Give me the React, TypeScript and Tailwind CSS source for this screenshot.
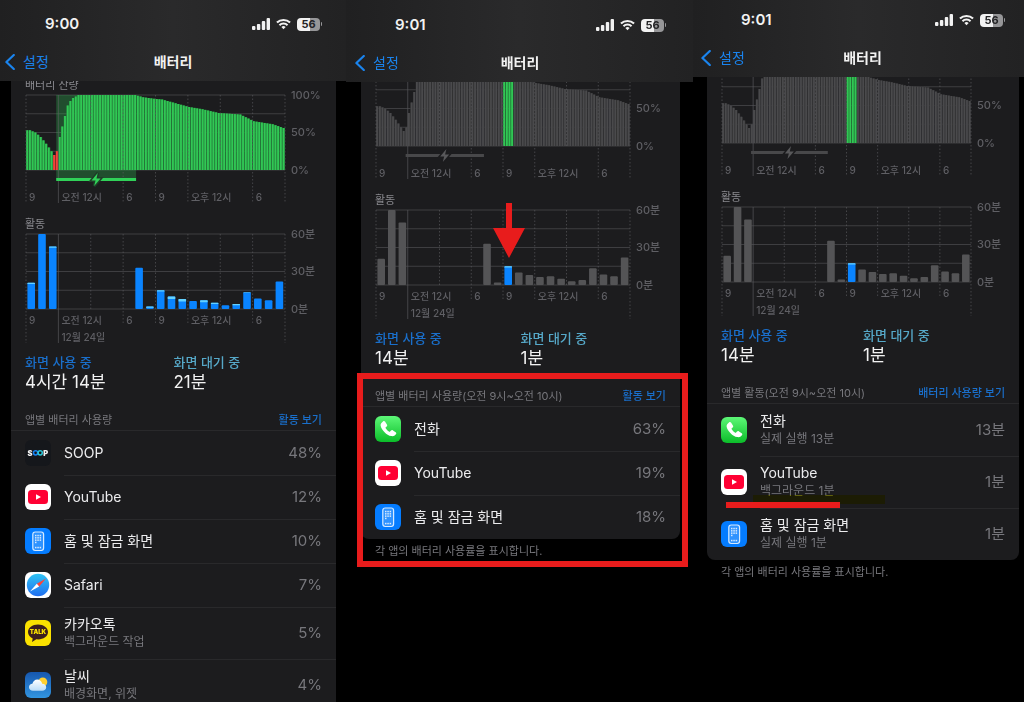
import type { ReactNode } from 'react'
import clsx from 'clsx'

type AppIconName = 'soop' | 'youtube' | 'home' | 'safari' | 'kakao' | 'weather' | 'phone'

interface AppUsage {
  icon: AppIconName
  name: string
  detail?: string
  value: string
  marked?: boolean
}

// battery level per 15 minutes, as [slot, percent] points
const LEVEL_POINTS: [number, number][] = [
  [0, 53], [1, 53], [3, 50], [5, 44], [7, 35], [9, 25], [10, 20], [11, 25], [12, 44], [13, 58],
  [14, 72], [15, 86], [16, 92], [17, 96], [18, 98], [19, 100], [40, 100], [43, 97], [47, 95],
  [50, 94], [54, 90], [57, 87], [60, 84], [65, 81], [71, 76], [79, 74], [84, 65], [91, 61], [95, 56],
]

const LEVELS = Array.from({ length: 96 }, (_, i) => {
  const next = Math.max(1, LEVEL_POINTS.findIndex(([slot]) => slot >= i))
  const [x0, y0] = LEVEL_POINTS[next - 1]
  const [x1, y1] = LEVEL_POINTS[next]
  return y0 + ((y1 - y0) * (i - x0)) / (x1 - x0)
})

// minutes per hour: [total, standby]
const ACTIVITY: [number, number][] = [
  [21, 1], [60, 0], [50, 1], [0, 0], [0, 0], [0, 0], [0, 0], [0, 0], [0, 0], [0, 0], [33, 0], [2, 1],
  [15, 1], [10, 2], [8, 2], [6.5, 0], [7, 1.5], [5, 1], [3, 0], [4, 1], [13.5, 0.5], [8.5, 0], [7, 0], [22, 0],
]

const HOUR_LABELS: Record<number, string> = { 0: '9', 1: '오전 12시', 3: '6', 4: '9', 5: '오후 12시', 7: '6' }

const PLOT_TOP = 2
const PLOT_H = 75

function LevelLines({ width }: { width: number }) {
  return (
    <g stroke="#3e3e41" strokeWidth={1}>
      {[0, 1, 2, 3, 4].map((i) => {
        const y = PLOT_TOP + (PLOT_H / 4) * i
        return <line key={i} x1={1} x2={width + 1} y1={y} y2={y} />
      })}
    </g>
  )
}

function HourLines({ width, axisEnd, longEnd }: { width: number; axisEnd: number; longEnd: number }) {
  return (
    <g stroke="#5a5a5e" strokeWidth={1} opacity={0.65}>
      {[0, 1, 2, 3, 4, 5, 6, 7, 8].map((i) => {
        const x = 1 + (width / 8) * i
        const end = i === 8 || i <= 1 ? longEnd : HOUR_LABELS[i] ? axisEnd : PLOT_TOP + PLOT_H
        return <line key={i} x1={x} x2={x} y1={PLOT_TOP} y2={end} strokeDasharray={i === 1 ? undefined : '1.5 2'} />
      })}
    </g>
  )
}

function HourLabels({ width, y }: { width: number; y: number }) {
  return (
    <>
      {Object.entries(HOUR_LABELS).map(([i, label]) => (
        <text key={i} x={4 + (width / 8) * Number(i)} y={y}>{label}</text>
      ))}
    </>
  )
}

interface ChartProps {
  width: number
  plot: number
  selected: boolean
}

function BatteryChart({ width, plot, selected }: ChartProps) {
  const step = plot / 96
  const chargeX = 1 + step * 11.2
  const chargeW = step * 29.6
  const boltX = chargeX + chargeW / 2

  return (
    <svg viewBox={`0 0 ${width} 112`} className="block w-full overflow-visible fill-[#5f5f64] text-[10px] font-medium" role="img" aria-label="배터리 잔량">
      <LevelLines width={plot} />
      {!selected && <rect x={chargeX} y={PLOT_TOP} width={chargeW} height={85} fill="#30d158" opacity={0.28} />}
      {LEVELS.map((level, i) => {
        const h = (level / 100) * PLOT_H
        const x = 1 + step * i
        let colors = ['#26853d', '#31c855']
        if (selected && (i < 48 || i > 51)) colors = ['#343436', '#4a4a4c']
        else if (i === 10 || i === 11) colors = ['#a83029', '#f2443a']
        return (
          <g key={i}>
            <rect x={x} y={PLOT_TOP + PLOT_H - h} width={step} height={h} fill={colors[0]} />
            <rect x={x + 0.3} y={PLOT_TOP + PLOT_H - h} width={step - 0.9} height={h} fill={colors[1]} />
          </g>
        )
      })}
      <HourLines width={plot} axisEnd={109} longEnd={110} />
      <rect x={chargeX} y={85} width={chargeW} height={3} fill={selected ? '#48484a' : '#30d158'} />
      <path
        transform={`translate(${boltX - 5} 80)`}
        d="M6.6 0 0.4 7.4h4L3 13l6.4-7.6H5.3z"
        fill={selected ? '#58585a' : '#30d158'}
        stroke={selected ? '#1c1c1e' : '#1f3d28'}
        strokeWidth={3}
        paintOrder="stroke"
      />
      <HourLabels width={plot} y={108} />
      {!selected && <text x={plot + 7} y={6} fontSize={11}>100%</text>}
      <text x={plot + 7} y={43} fontSize={11}>50%</text>
      <text x={plot + 7} y={81} fontSize={11}>0%</text>
    </svg>
  )
}

function ActivityChart({ width, plot, selected, arrow }: ChartProps & { arrow?: boolean }) {
  const step = plot / 24

  return (
    <svg viewBox={`0 0 ${width} 112`} className="block w-full overflow-visible fill-[#5f5f64] text-[10px] font-medium" role="img" aria-label="활동">
      <LevelLines width={plot} />
      <HourLines width={plot} axisEnd={93} longEnd={111} />
      {ACTIVITY.map(([total, standby], i) => {
        if (!total) return null
        const h = (total / 60) * PLOT_H
        const y = PLOT_TOP + PLOT_H - h
        const dimmed = selected && i !== 12
        return (
          <g key={i}>
            <rect x={2.4 + step * i} y={y} width={7.6} height={h} rx={1} fill={dimmed ? '#545456' : '#0a84ff'} />
            {!dimmed && standby > 0 && (
              <rect x={2.4 + step * i} y={y} width={7.6} height={(standby / 60) * PLOT_H} rx={0.5} fill="#64d2ff" />
            )}
          </g>
        )
      })}
      <HourLabels width={plot} y={92} />
      <text x={4 + plot / 8} y={109}>12월 24일</text>
      <text x={plot + 7} y={6} fontSize={11}>60분</text>
      <text x={plot + 7} y={43} fontSize={11}>30분</text>
      <text x={plot + 7} y={81} fontSize={11}>0분</text>
      {arrow && <path d="M131 -5h6v25h13l-16 30-16-30h13z" fill="#e81c1c" />}
    </svg>
  )
}

function AppIcon({ name }: { name: AppIconName }) {
  const art: Record<AppIconName, ReactNode> = {
    soop: (
      <>
        <rect width="26" height="26" rx="6" fill="#15171b" />
        <g fontSize="7.5" fontWeight="900" fill="#f4f4f4">
          <text x="2.6" y="15.5">S</text>
          <text x="18.2" y="15.5">P</text>
        </g>
        <circle cx="10.6" cy="12.8" r="2.1" fill="none" stroke="#1684f5" strokeWidth="1.5" />
        <circle cx="15.2" cy="12.8" r="2.1" fill="none" stroke="#2bc8d8" strokeWidth="1.5" />
      </>
    ),
    youtube: (
      <>
        <rect width="26" height="26" rx="6" fill="#fff" />
        <rect x="3" y="6" width="20" height="14" rx="3.5" fill="#ff0033" />
        <path d="M11 10.2v5.600l5-2.800z" fill="#fff" />
      </>
    ),
    home: (
      <>
        <rect width="26" height="26" rx="6" fill="#047cff" />
        <rect x="7.8" y="4" width="10.8" height="18.5" rx="2.4" fill="#2f93ff" stroke="#d6eaff" strokeWidth="1.2" />
        <g fill="#d6eaff">
          {[0, 1, 2].map((r) => [0, 1, 2].map((c) => (
            <rect key={`${r}${c}`} x={10 + c * 2.3} y={6.8 + r * 2.3} width="1.5" height="1.5" />
          )))}
          <rect x="10" y="13.7" width="1.5" height="1.5" />
          {[0, 1, 2].map((c) => <rect key={c} x={10 + c * 2.3} y="18.8" width="1.5" height="1.5" />)}
        </g>
      </>
    ),
    safari: (
      <>
        <defs>
          <linearGradient id="safari" x2="0" y2="1">
            <stop stopColor="#2fc4f4" />
            <stop offset="1" stopColor="#1f6ef0" />
          </linearGradient>
        </defs>
        <rect width="26" height="26" rx="6" fill="#fff" />
        <circle cx="13" cy="13" r="11.2" fill="url(#safari)" />
        <path d="M21 6.5 11.8 11.7l2.4 2.8z" fill="#ff4238" />
        <path d="M5 19.5 11.8 11.7l2.4 2.8z" fill="#fff" />
      </>
    ),
    kakao: (
      <>
        <rect width="26" height="26" rx="6" fill="#fae100" />
        <path d="M13 4.5c-5.6 0-10 3.3-10 7.5 0 2.8 1.9 5.1 4.7 6.4L7 22l4.3-2.7c.6.1 1.1.1 1.7.1 5.6 0 10-3.2 10-7.4s-4.4-7.5-10-7.5z" fill="#3b1e1e" />
        <text x="13" y="14.3" fontSize="6" fontWeight="900" fill="#fae100" textAnchor="middle">TALK</text>
      </>
    ),
    weather: (
      <>
        <defs>
          <linearGradient id="sky" x2="0" y2="1">
            <stop stopColor="#1657ae" />
            <stop offset="1" stopColor="#3295e0" />
          </linearGradient>
          <linearGradient id="cloud" x2="0" y2="1">
            <stop stopColor="#fff" />
            <stop offset="1" stopColor="#b9dcf8" />
          </linearGradient>
        </defs>
        <rect width="26" height="26" rx="6" fill="url(#sky)" />
        <circle cx="17.8" cy="10" r="4.5" fill="#ffd02f" />
        <path d="M8 18.8c-2.3 0-4-1.5-4-3.5s1.5-3.4 3.4-3.5c.7-2.7 2.5-4.3 4.9-4.3 2.5 0 4.3 1.7 4.9 4.2 2.2.1 4 1.500 4 3.6s-1.7 3.5-4 3.5z" fill="url(#cloud)" />
      </>
    ),
    phone: (
      <>
        <defs>
          <linearGradient id="call" x2="0" y2="1">
            <stop stopColor="#5df777" />
            <stop offset="1" stopColor="#0bbd29" />
          </linearGradient>
        </defs>
        <rect width="26" height="26" rx="6" fill="url(#call)" />
        <path d="M8 5.4c.7-.6 1.5-.5 2 .2l1.900 2.800c.5.7.4 1.500-.2 2l-1 .9c-.2.3-.2.6 0 .9.9 1.400 2 2.500 3.500 3.500.3.2.6.2.9-.1l.9-1c.5-.6 1.300-.7 2-.2l2.700 1.900c.7.5.8 1.300.2 2-1.300 1.600-2.600 2.300-4.600 1.800C11.500 19 6.8 14.300 5.700 9.900c-.5-1.900.7-3.200 2.300-4.500z" fill="#fff" />
      </>
    ),
  }

  return <svg viewBox="0 0 26 26" className="size-[26px] shrink-0 self-center" aria-hidden="true">{art[name]}</svg>
}

function StatusIcons() {
  return (
    <div className="flex items-center gap-1.5 text-[#f2f2f2]">
      <svg width="18" height="12" viewBox="0 0 18 12" fill="currentColor" aria-hidden="true">
        <rect x="0" y="8" width="3.4" height="4" rx="1" />
        <rect x="4.9" y="6" width="3.4" height="6" rx="1" />
        <rect x="9.8" y="3" width="3.4" height="9" rx="1" />
        <rect x="14.6" y="0" width="3.4" height="12" rx="1" />
      </svg>
      <svg width="15" height="12" viewBox="0 0 16 12" fill="none" stroke="currentColor" strokeWidth="2.2" aria-hidden="true">
        <path d="M1 4.5a10 10 0 0 1 14 0" />
        <path d="M3.7 7.3a6.2 6.2 0 0 1 8.6 0" />
        <path d="M8 11.7 5.7 9.300a3.3 3.3 0 0 1 4.6 0z" fill="currentColor" stroke="none" />
      </svg>
      <div className="flex items-center gap-px">
        <div className="flex h-[13px] w-[23px] items-center justify-center rounded-[4px] bg-linear-to-r from-[#f2f2f2] from-56% to-[#969698] to-56% text-[11px] leading-none font-bold text-[#242426]">
          56
        </div>
        <div className="h-1 w-px rounded-r bg-[#969698]" />
      </div>
    </div>
  )
}

function UsageRow({ app, first }: { app: AppUsage; first: boolean }) {
  return (
    <li className={clsx('flex gap-[13px] pl-[14px]', app.detail ? 'h-[52px]' : 'h-11')}>
      <AppIcon name={app.icon} />
      <div className={clsx('relative flex flex-1 items-center justify-between border-t pr-[14px]', first ? 'border-transparent' : 'border-[#29292b]')}>
        <div className="pb-0.5">
          <div className="text-sm leading-[19px] text-[#ececee]">{app.name}</div>
          {app.detail && <div className="pb-px text-xs leading-[18px] text-[#77777c]">{app.detail}</div>}
        </div>
        <div className="pb-px text-[15px] text-[#77777c]">{app.value}</div>
        {app.marked && (
          <>
            <div className="absolute -left-[7px] bottom-1 h-[9px] w-[132px] bg-[#ffff20] mix-blend-multiply" />
            <div className="absolute -left-[34px] bottom-0 h-1.5 w-[114px] bg-[#e81c1c]" />
          </>
        )}
      </div>
    </li>
  )
}

interface PhoneProps {
  time: string
  width: number
  plot: number
  headerClass: string
  cardClass: string
  scrollClass: string
  screenOn: string
  standby: string
  listTitle: string
  action: string
  apps: AppUsage[]
  selected?: boolean
  highlighted?: boolean
}

function Phone(props: PhoneProps) {
  const { selected = false, highlighted = false } = props

  return (
    <section className="min-w-0">
      <header className={clsx('relative z-10 flex flex-col justify-end bg-linear-to-r from-[#202021] via-[#2a2a2b] to-[#222223]', props.headerClass)}>
        <div className="flex h-[38px] items-center justify-between pr-[19px] pl-10">
          <span className="text-[15px] font-semibold text-[#f2f2f2]">{props.time}</span>
          <StatusIcons />
        </div>
        <nav className="grid h-[38px] grid-cols-[1fr_auto_1fr] items-center">
          <a href="#settings" className="flex items-center gap-2 text-sm text-[#1a84ee]">
            <svg width="10" height="16" viewBox="0 0 10 16" fill="none" stroke="currentColor" strokeWidth="2.2" strokeLinecap="round" strokeLinejoin="round" aria-hidden="true">
              <path d="M8.8 1 1.4 8l7.4 7" />
            </svg>
            설정
          </a>
          <h1 className="text-sm font-bold text-[#f2f2f2]">배터리</h1>
        </nav>
      </header>

      <main className={clsx(props.cardClass, props.scrollClass)}>
        <div className="bg-[#1c1c1e] px-[14px]">
          {!selected && <h2 className="text-[11px] leading-4 text-[#8a8a8f]">배터리 잔량</h2>}
          <BatteryChart width={props.width} plot={props.plot} selected={selected} />
          <h2 className="mt-[11px] text-[11px] leading-4 text-[#8a8a8f]">활동</h2>
          <ActivityChart width={props.width} plot={props.plot} selected={selected} arrow={highlighted} />
          <dl className="grid grid-cols-2 pt-[9px]">
            <div>
              <dt className="text-[13px] leading-[18px] font-medium text-[#1a6fcb]">화면 사용 중</dt>
              <dd className="text-[17px] leading-[22px] text-[#f2f2f2]">{props.screenOn}</dd>
            </div>
            <div>
              <dt className="text-[13px] leading-[18px] font-medium text-[#56a8c8]">화면 대기 중</dt>
              <dd className="text-[17px] leading-[22px] text-[#f2f2f2]">{props.standby}</dd>
            </div>
          </dl>
        </div>

        <div className="relative">
          <div className="rounded-b-lg bg-[#1c1c1e] pt-[19px]">
            <div className="flex items-center justify-between border-b border-[#29292b] px-[14px] pb-0.5 text-[11px] leading-4">
              <h2 className="text-[#77777c]">{props.listTitle}</h2>
              <button type="button" className="font-medium text-[#1a6fcb]">{props.action}</button>
            </div>
            <ul>
              {props.apps.map((app, i) => (
                <UsageRow key={app.icon} app={app} first={i === 0} />
              ))}
            </ul>
          </div>
          {selected && <p className="px-[14px] pt-1 text-[11px] leading-4 text-[#77777c]">각 앱의 배터리 사용률을 표시합니다.</p>}
          {highlighted && <div className="absolute top-1 -right-2 -bottom-2 -left-1 border-6 border-[#e81c1c]" />}
        </div>
      </main>
    </section>
  )
}

export default function App() {
  return (
    <div className="grid h-screen grid-cols-[346fr_347fr_331fr] overflow-hidden bg-black font-['Inter','Noto_Sans_CJK_KR',sans-serif]">
      <Phone
        time="9:00"
        width={297}
        plot={259}
        headerClass="h-[81px] px-[5px]"
        cardClass="ml-[11px] mr-2.5"
        scrollClass="-mt-1"
        screenOn="4시간 14분"
        standby="21분"
        listTitle="앱별 배터리 사용량"
        action="활동 보기"
        apps={[
          { icon: 'soop', name: 'SOOP', value: '48%' },
          { icon: 'youtube', name: 'YouTube', value: '12%' },
          { icon: 'home', name: '홈 및 잠금 화면', value: '10%' },
          { icon: 'safari', name: 'Safari', value: '7%' },
          { icon: 'kakao', name: '카카오톡', detail: '백그라운드 작업', value: '5%' },
          { icon: 'weather', name: '날씨', detail: '배경화면, 위젯', value: '4%' },
        ]}
      />
      <Phone
        time="9:01"
        width={291}
        plot={254}
        headerClass="h-[82px] pl-[9px] pr-2"
        cardClass="ml-[15px] mr-[13px]"
        scrollClass="-mt-[13px]"
        screenOn="14분"
        standby="1분"
        listTitle="앱별 배터리 사용량(오전 9시~오전 10시)"
        action="활동 보기"
        apps={[
          { icon: 'phone', name: '전화', value: '63%' },
          { icon: 'youtube', name: 'YouTube', value: '19%' },
          { icon: 'home', name: '홈 및 잠금 화면', value: '18%' },
        ]}
        selected
        highlighted
      />
      <Phone
        time="9:01"
        width={284}
        plot={249}
        headerClass="h-[77px] pl-2"
        cardClass="ml-[14px] mr-[5px]"
        scrollClass="-mt-[11px]"
        screenOn="14분"
        standby="1분"
        listTitle="앱별 활동(오전 9시~오전 10시)"
        action="배터리 사용량 보기"
        apps={[
          { icon: 'phone', name: '전화', detail: '실제 실행 13분', value: '13분' },
          { icon: 'youtube', name: 'YouTube', detail: '백그라운드 1분', value: '1분', marked: true },
          { icon: 'home', name: '홈 및 잠금 화면', detail: '실제 실행 1분', value: '1분' },
        ]}
        selected
      />
    </div>
  )
}
